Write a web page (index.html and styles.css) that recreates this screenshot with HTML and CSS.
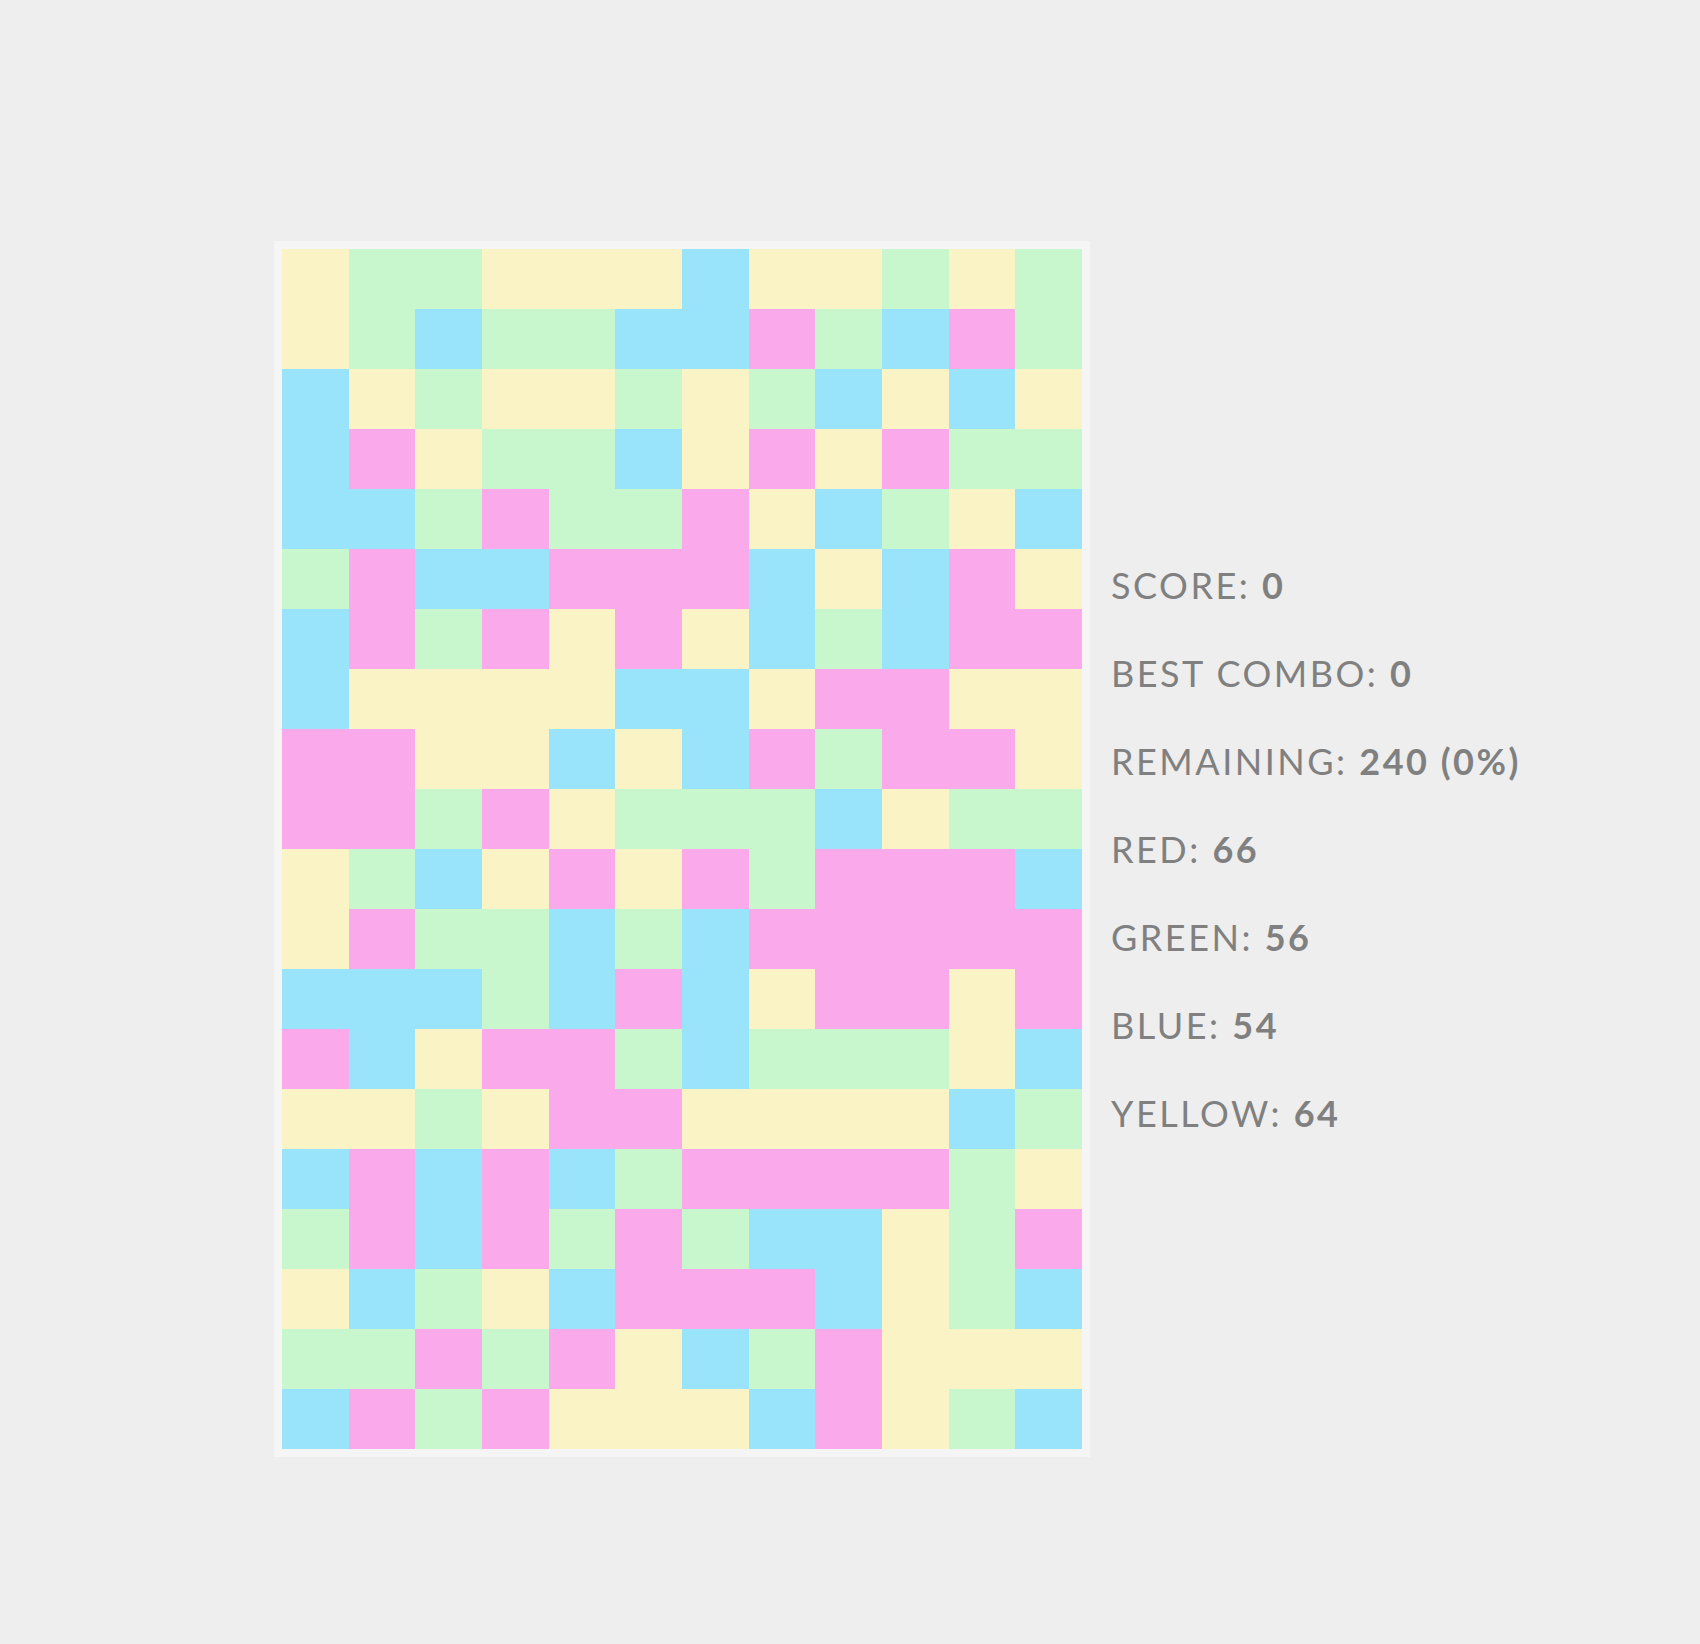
FILE: index.html
```html
<!DOCTYPE html>
<html>
    <head>
	<meta charset="UTF-8">
	<meta name="viewport" content="width=device-width, initial-scale=1.0">
	<title>Blocks</title>
	<link rel="stylesheet" href="styles.css">
    </head>
    <body>
      <div class = "game">
	      <div id = "board" class = "board"></div>

	      <div class = "stats">
		      <p class = "stat">SCORE: <b>0</b></p>
		      <p class = "stat">BEST COMBO: <b>0</b></p>
		      <p class = "stat">REMAINING: <b>240 (0%)</b></p>
		      <p class = "stat">RED: <b>66</b></p>
		      <p class = "stat">GREEN: <b>56</b></p>
		      <p class = "stat">BLUE: <b>54</b></p>
		      <p class = "stat">YELLOW: <b>64</b></p>
	      </div>
      </div>

      <script>
		rows = [
			"YGGYYYBYYGYG",
			"YGBGGBBPGBPG",
			"BYGYYGYGBYBY",
			"BPYGGBYPYPGG",
			"BBGPGGPYBGYB",
			"GPBBPPPBYBPY",
			"BPGPYPYBGBPP",
			"BYYYYBBYPPYY",
			"PPYYBYBPGPPY",
			"PPGPYGGGBYGG",
			"YGBYPYPGPPPB",
			"YPGGBGBPPPPP",
			"BBBGBPBYPPYP",
			"PBYPPGBGGGYB",
			"YYGYPPYYYYBG",
			"BPBPBGPPPPGY",
			"GPBPGPGBBYGP",
			"YBGYBPPPBYGB",
			"GGPGPYBGPYYY",
			"BPGPYYYBPYGB"
		];

		names = {P: "red", G: "green", B: "blue", Y: "yellow"};

		var board = document.getElementById("board");

		for(var r = 0; r < rows.length; r++){
			for(var c = 0; c < rows[r].length; c++){
				var cell = document.createElement("div");
				cell.className = "cell " + names[rows[r][c]];
				board.appendChild(cell);
			}
		}
      </script>
    </body>
</html>
```

FILE: styles.css
```css
body {
	background-color: #eeeeee;
	margin: 0px;
	padding: 0px;
	font-family: Lato, "Open Sans", sans-serif;
}

.game{
	display: flex;
	align-items: center;
	padding-top: 241px;
	padding-left: 274px;
}

.board{
	display: grid;
	grid-template-columns: repeat(12, 1fr);
	grid-auto-rows: 60px;
	width: 800px;
	padding: 8px;
	background-color: #f5f5f5;
}

.cell.red{ background-color: #faa9eb; }
.cell.green{ background-color: #c8f7ce; }
.cell.blue{ background-color: #9ae4fb; }
.cell.yellow{ background-color: #faf3c6; }

.stats{
	margin-left: 21px;
	display: flex;
	flex-direction: column;
}

.stat{
	margin: 0px;
	font-size: 36px;
	line-height: 88px;
	color: #808080;
	letter-spacing: 2.5px;
	white-space: nowrap;
}

.stat b{
	font-weight: 700;
}
```
